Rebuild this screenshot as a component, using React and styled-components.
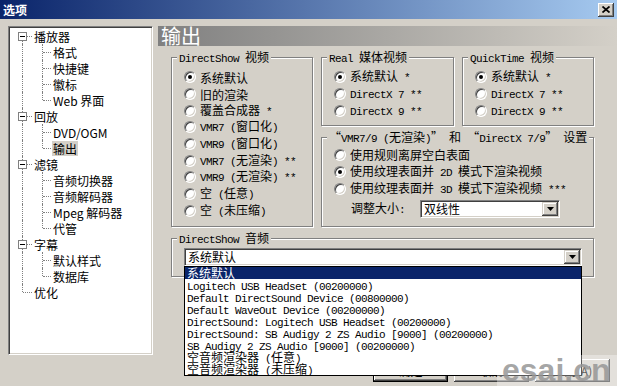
import React from 'react'
import styled, { createGlobalStyle } from 'styled-components'

const GlobalStyle = createGlobalStyle`
  * { box-sizing: border-box; }
  html, body {
    margin: 0;
    padding: 0;
    background: #d4d0c8;
  }
  body {
    font-family: "Noto Sans CJK SC", "Liberation Sans", sans-serif;
    font-size: 12px;
    color: #000;
  }
`

const tree = [
  { label: '播放器', children: ['格式', '快捷键', '徽标', 'Web 界面'] },
  { label: '回放', children: ['DVD/OGM', '输出'] },
  { label: '滤镜', children: ['音频切换器', '音频解码器', 'Mpeg 解码器', '代管'] },
  { label: '字幕', children: ['默认样式', '数据库'] },
  { label: '优化', children: [] },
]

const dsVideo = [
  '系统默认', '旧的渲染', '覆盖合成器 *', 'VMR7 (窗口化)', 'VMR9 (窗口化)',
  'VMR7 (无渲染) **', 'VMR9 (无渲染) **', '空 (任意)', '空 (未压缩)',
]
const dxOptions = ['系统默认 *', 'DirectX 7 **', 'DirectX 9 **']
const vmrOptions = [
  '使用规则离屏空白表面',
  '使用纹理表面并 2D 模式下渲染视频',
  '使用纹理表面并 3D 模式下渲染视频 ***',
]
const audioDevices = [
  '系统默认',
  'Logitech USB Headset (00200000)',
  'Default DirectSound Device (00800000)',
  'Default WaveOut Device (00200000)',
  'DirectSound: Logitech USB Headset (00200000)',
  'DirectSound: SB Audigy 2 ZS Audio [9000] (00200000)',
  'SB Audigy 2 ZS Audio [9000] (00200000)',
  '空音频渲染器 (任意)',
  '空音频渲染器 (未压缩)',
]

// latin runs use the narrow fixed-width face, like the dialog font does
const Mixed = ({ text }) => (
  <>
    {text.split(/([\x20-\x7e]+)/).filter(Boolean).map((part, i) =>
      /^[\x20-\x7e]+$/.test(part)
        ? <Mono key={i}>{part}</Mono>
        : <span key={i}>{part}</span>
    )}
  </>
)

const RadioGroup = ({ items, checked, rowHeight }) => (
  <>
    {items.map((item, i) => (
      <Option key={item} $h={rowHeight}>
        <Radio $checked={i === checked} />
        <OptionText><Mixed text={item} /></OptionText>
      </Option>
    ))}
  </>
)

const DropArrow = () => (
  <ComboButton>
    <svg width="7" height="4" viewBox="0 0 7 4">
      <polygon points="0,0 7,0 3.5,4" fill="#000" />
    </svg>
  </ComboButton>
)

const App = () => {
  return (
    <Window>
      <GlobalStyle />
      <TitleBar>
        <Title>选项</Title>
        <CloseButton>
          <svg width="8" height="7" viewBox="0 0 8 7">
            <path d="M0.5 0.5 L7.5 6.5 M7.5 0.5 L0.5 6.5" stroke="#000" strokeWidth="1.7" />
          </svg>
        </CloseButton>
      </TitleBar>

      <Body>
        <Tree>
          {tree.map((node, ni) => {
            const isFirst = ni === 0
            const isLast = ni === tree.length - 1
            return (
              <React.Fragment key={node.label}>
                <TreeRow>
                  <Guide $w={20} $v={isFirst ? 'bottom' : isLast ? 'top' : 'full'} $h>
                    {node.children.length > 0 && <Expander />}
                  </Guide>
                  <TreeText>{node.label}</TreeText>
                </TreeRow>
                {node.children.map((child, ci) => (
                  <TreeRow key={child}>
                    <Guide $w={20} $v={isLast ? 'none' : 'full'} />
                    <Guide $w={19} $v={ci === node.children.length - 1 ? 'top' : 'full'} $h />
                    <TreeText $selected={child === '输出'}>{child}</TreeText>
                  </TreeRow>
                ))}
              </React.Fragment>
            )
          })}
        </Tree>

        <Page>
          <PageHeader>输出</PageHeader>
          <Panels>
            <Group $col="1" $row="1 / span 2">
              <Legend><Mixed text="DirectShow 视频" /></Legend>
              <RadioGroup items={dsVideo} checked={0} rowHeight={16.7} />
            </Group>

            <Group $col="2" $row="1">
              <Legend><Mixed text="Real 媒体视频" /></Legend>
              <RadioGroup items={dxOptions} checked={0} rowHeight={16.7} />
            </Group>

            <Group $col="3" $row="1">
              <Legend><Mixed text="QuickTime 视频" /></Legend>
              <RadioGroup items={dxOptions} checked={0} rowHeight={16.7} />
            </Group>

            <Group $col="2 / span 2" $row="2" $top={3}>
              <Legend><Mixed text="“VMR7/9 (无渲染)” 和 “DirectX 7/9” 设置" /></Legend>
              <RadioGroup items={vmrOptions} checked={1} rowHeight={17} />
              <ResizeRow>
                <ResizeLabel><Mixed text="调整大小:" /></ResizeLabel>
                <Combo $w={140}>
                  <ComboValue>双线性</ComboValue>
                  <DropArrow />
                </Combo>
              </ResizeRow>
            </Group>

            <Group $col="1 / span 3" $row="3" $top={4}>
              <Legend><Mixed text="DirectShow 音频" /></Legend>
              <Combo $w={398}>
                <ComboValue>系统默认</ComboValue>
                <DropArrow />
                <DropList>
                  {audioDevices.map((dev, i) => (
                    <DropItem key={dev} $active={i === 0}><Mixed text={dev} /></DropItem>
                  ))}
                </DropList>
              </Combo>
            </Group>
          </Panels>

          <ButtonRow>
            <Button $default>确定</Button>
            <Button>取消</Button>
            <Button>应用(A)</Button>
          </ButtonRow>
        </Page>
      </Body>

      <Watermark>esai.cn</Watermark>
    </Window>
  )
}

const Window = styled.div`
  position: relative;
  display: flex;
  flex-direction: column;
  width: 617px;
  height: 386px;
  overflow: hidden;
  background: #d4d0c8;
`

const TitleBar = styled.div`
  display: flex;
  align-items: center;
  justify-content: space-between;
  height: 19px;
  flex: none;
  padding: 0 3px 0 3px;
  background: linear-gradient(to right, #0a246a, #a6caf0);
`

const Title = styled.span`
  color: #fff;
  font-weight: bold;
  font-size: 12px;
  line-height: 19px;
`

const CloseButton = styled.span`
  display: flex;
  align-items: center;
  justify-content: center;
  width: 16px;
  height: 14px;
  background: #d4d0c8;
  box-shadow: inset -1px -1px #404040, inset 1px 1px #fff, inset -2px -2px #808080;
`

const Body = styled.div`
  display: flex;
  flex: 1;
  padding: 7px 0 0 8px;
`

const Tree = styled.div`
  flex: none;
  width: 145px;
  height: 329px;
  padding: 1px 0 0 4px;
  background: #fff;
  border: 1px solid;
  border-color: #808080 #fff #fff #808080;
  box-shadow: inset 1px 1px #404040, inset -1px -1px #d4d0c8;
`

const TreeRow = styled.div`
  display: flex;
  align-items: center;
  height: 16px;
  white-space: nowrap;
`

const Guide = styled.span`
  position: relative;
  flex: none;
  width: ${p => p.$w}px;
  height: 16px;

  &::before {
    content: '';
    display: ${p => (p.$v === 'none' || !p.$v ? 'none' : 'block')};
    position: absolute;
    left: 9px;
    top: ${p => (p.$v === 'bottom' ? '8px' : '0')};
    height: ${p => (p.$v === 'full' ? '16px' : '8px')};
    border-left: 1px dotted #808080;
  }

  &::after {
    content: '';
    display: ${p => (p.$h ? 'block' : 'none')};
    position: absolute;
    left: 10px;
    right: 1px;
    top: 8px;
    border-top: 1px dotted #808080;
  }
`

const Expander = styled.span`
  position: absolute;
  z-index: 1;
  left: 5px;
  top: 4px;
  width: 9px;
  height: 9px;
  border: 1px solid #808080;
  background: #fff;

  &::after {
    content: '';
    position: absolute;
    left: 1px;
    top: 3px;
    width: 5px;
    height: 1px;
    background: #000;
  }
`

const TreeText = styled.span`
  padding: 0 1px;
  line-height: 15px;
  font-size: 12px;
  background: ${p => (p.$selected ? '#d4d0c8' : 'transparent')};
`

const Page = styled.div`
  display: flex;
  flex-direction: column;
  flex: 1;
  margin-left: 5px;
`

const PageHeader = styled.div`
  height: 20px;
  padding-left: 3px;
  font-size: 20px;
  line-height: 20px;
  color: #fff;
  background: linear-gradient(to right, #808080, #d4d0c8);
`

const Panels = styled.div`
  display: grid;
  grid-template-columns: 142px 133px 132px;
  grid-template-rows: 75px 96px 45px;
  gap: 5px 8px;
  margin-top: 5px;
  padding-left: 13px;
`

const Group = styled.fieldset`
  grid-column: ${p => p.$col};
  grid-row: ${p => p.$row};
  min-width: 0;
  margin: 0;
  padding: ${p => p.$top ?? 6}px 0 0 12px;
  border: 1px solid #808080;
  box-shadow: inset 1px 1px #fff, 1px 1px #fff;
`

const Legend = styled.legend`
  margin-left: -7px;
  padding: 0 2px;
  height: 12px;
  line-height: 12px;
  white-space: nowrap;
  background: #d4d0c8;
`

const Mono = styled.span`
  font-family: "Liberation Mono", monospace;
  font-size: 11px;
  letter-spacing: -0.6px;
  white-space: pre;
`

const Option = styled.div`
  display: flex;
  align-items: center;
  height: ${p => p.$h}px;
  white-space: nowrap;
`

const Radio = styled.span`
  position: relative;
  flex: none;
  width: 12px;
  height: 12px;
  border-radius: 50%;
  background: #fff;
  border: 1px solid;
  border-color: #808080 #fff #fff #808080;
  box-shadow: inset 1px 1px #404040, inset -1px -1px #d4d0c8;

  &::after {
    content: '';
    display: ${p => (p.$checked ? 'block' : 'none')};
    position: absolute;
    left: 3px;
    top: 3px;
    width: 4px;
    height: 4px;
    border-radius: 50%;
    background: #000;
  }
`

const OptionText = styled.span`
  margin-left: 4px;
  line-height: 13px;
`

const ResizeRow = styled.div`
  display: flex;
  align-items: center;
  margin-top: 3px;
  padding-left: 17px;
`

const ResizeLabel = styled.span`
  width: 69px;
  line-height: 14px;
`

const Combo = styled.div`
  position: relative;
  display: flex;
  align-items: center;
  width: ${p => p.$w}px;
  height: 18px;
  padding: 1px 1px 1px 3px;
  background: #fff;
  border: 1px solid;
  border-color: #808080 #fff #fff #808080;
  box-shadow: inset 1px 1px #404040, inset -1px -1px #d4d0c8;
`

const ComboValue = styled.span`
  flex: 1;
  line-height: 14px;
`

const ComboButton = styled.span`
  display: flex;
  align-items: center;
  justify-content: center;
  flex: none;
  width: 16px;
  height: 14px;
  background: #d4d0c8;
  box-shadow: inset -1px -1px #404040, inset 1px 1px #d4d0c8, inset -2px -2px #808080, inset 2px 2px #fff;
`

const DropList = styled.ul`
  position: absolute;
  z-index: 5;
  left: -1px;
  top: calc(100% + 1px);
  width: calc(100% + 2px);
  margin: 0;
  padding: 0;
  list-style: none;
  background: #fff;
  border: 1px solid #000;
`

const DropItem = styled.li`
  height: 12px;
  padding-left: 2px;
  line-height: 12px;
  white-space: nowrap;
  color: ${p => (p.$active ? '#fff' : '#000')};
  background: ${p => (p.$active ? '#0a246a' : 'transparent')};
`

const ButtonRow = styled.div`
  display: flex;
  justify-content: flex-end;
  gap: 6px;
  margin-top: auto;
  padding: 0 7px 4px 0;
`

const Button = styled.span`
  display: flex;
  align-items: center;
  justify-content: center;
  width: 75px;
  height: 23px;
  background: #d4d0c8;
  border: ${p => (p.$default ? '1px solid #000' : 'none')};
  box-shadow: inset -1px -1px #404040, inset 1px 1px #fff, inset -2px -2px #808080;
`

const Watermark = styled.div`
  position: absolute;
  right: 0;
  bottom: 0;
  width: 120px;
  height: 31px;
  padding-left: 5px;
  font-family: "Liberation Sans", Arial, sans-serif;
  font-weight: bold;
  font-size: 32px;
  line-height: 31px;
  color: rgba(150, 150, 150, 0.85);
  background: rgba(255, 255, 255, 0.35);
  white-space: nowrap;
  z-index: 10;
`

export default App
